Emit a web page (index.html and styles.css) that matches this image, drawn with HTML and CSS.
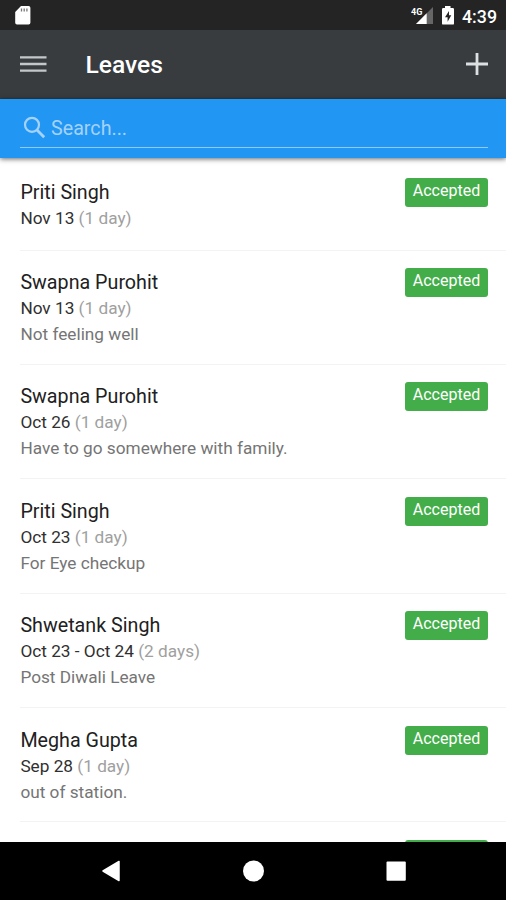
FILE: index.html
```html
<!DOCTYPE html>
<html lang="en">
<head>
<meta charset="utf-8">
<title>Leaves</title>
<link rel="stylesheet" href="styles.css">
</head>
<body>
<div class="screen">
  <div class="status">
    <svg class="sd" width="18" height="22" viewBox="0 0 18 22"><path d="M7 2h7.600a1.800 1.800 0 0 1 1.800 1.800v15a1.800 1.800 0 0 1-1.800 1.800H3a1.800 1.800 0 0 1-1.800-1.800V8z" fill="#fff"/><path d="M7.500 4.500v3M10.200 4.500v3M12.900 4.500v3" stroke="#777" stroke-width="1.300"/></svg>
    <div class="status-right">
      <svg width="24" height="22" viewBox="0 0 24 22"><path d="M22 3v17H5z" fill="#666"/><path d="M15.700 9.300V20H5z" fill="#fff"/><text x="0" y="10.500" class="net">4G</text></svg>
      <svg class="battery" width="14" height="22" viewBox="0 0 14 22"><path d="M4 2h5.500v2h2.300q1.200 0 1.200 1.200v14.200q0 1.200-1.200 1.200H2.200Q1 20.600 1 19.400V5.200Q1 4 2.200 4H4z" fill="#fff"/><path d="M8 7 4 13.300h2.600v4.500l3.700-6.500H8z" fill="#242424"/></svg>
      <span class="clock">4:39</span>
    </div>
  </div>
  <header class="toolbar">
    <svg width="28" height="20" viewBox="0 0 28 20"><path d="M0 3.300h26.500M0 10h26.500M0 16.700h26.500" stroke="#c3c7c8" stroke-width="2.300"/></svg>
    <h1>Leaves</h1>
    <svg class="plus" width="24" height="24" viewBox="0 0 24 24"><path d="M12 1v22M1 12h22" stroke="#dce0e1" stroke-width="2.800"/></svg>
  </header>
  <div class="search">
    <div class="field">
      <svg width="24" height="24" viewBox="0 0 24 24"><circle cx="9" cy="8.800" r="7" fill="none" stroke="#a5d2fa" stroke-width="2.200"/><path d="m14 14 7.200 7.200" stroke="#a5d2fa" stroke-width="2.800"/></svg>
      <span>Search...</span>
    </div>
  </div>
  <main class="list">
    <article class="row short"><div><h2>Priti Singh</h2><p class="date">Nov 13 <span>(1 day)</span></p></div><b class="tag">Accepted</b></article>
    <article class="row"><div><h2>Swapna Purohit</h2><p class="date">Nov 13 <span>(1 day)</span></p><p class="note">Not feeling well</p></div><b class="tag">Accepted</b></article>
    <article class="row"><div><h2>Swapna Purohit</h2><p class="date">Oct 26 <span>(1 day)</span></p><p class="note">Have to go somewhere with family.</p></div><b class="tag">Accepted</b></article>
    <article class="row"><div><h2>Priti Singh</h2><p class="date">Oct 23 <span>(1 day)</span></p><p class="note">For Eye checkup</p></div><b class="tag">Accepted</b></article>
    <article class="row"><div><h2>Shwetank Singh</h2><p class="date">Oct 23 - Oct 24 <span>(2 days)</span></p><p class="note">Post Diwali Leave</p></div><b class="tag">Accepted</b></article>
    <article class="row"><div><h2>Megha Gupta</h2><p class="date">Sep 28 <span>(1 day)</span></p><p class="note">out of station.</p></div><b class="tag">Accepted</b></article>
    <article class="row"><div></div><b class="tag"></b></article>
  </main>
  <nav class="navbar">
    <svg width="506" height="58" viewBox="0 0 506 58"><path d="M103 29 119 19.500v19z" fill="#fff" stroke="#fff" stroke-width="1.500" stroke-linejoin="round"/><circle cx="253.500" cy="29" r="10.500" fill="#fff"/><rect x="386.500" y="19.500" width="19.300" height="19.300" rx="1" fill="#fff"/></svg>
  </nav>
</div>
</body>
</html>
```
FILE: styles.css
```css
* { box-sizing: border-box; }
body { margin: 0; background: #fff; font-family: Roboto, "Liberation Sans", sans-serif; }
h1, h2, p { margin: 0; font-weight: 400; }
svg { display: block; flex: none; }
.screen { width: 506px; height: 900px; display: flex; flex-direction: column; overflow: hidden; }
.status { flex: none; height: 30px; background: #242424; display: flex; justify-content: space-between; padding: 4px 9px 0 14px; }
.status-right { display: flex; }
.net { font: 700 9px Roboto, sans-serif; fill: #fff; }
.battery { margin-left: 6px; }
.clock { margin-left: 7px; color: #fff; font-size: 17.8px; font-weight: 500; line-height: 25px; }
.toolbar { flex: none; height: 69px; background: #393c3f; border-bottom: 1px solid #2b3f48; display: flex; align-items: center; padding: 0 17px 0 20px; }
.toolbar h1 { margin-left: 37.500px; padding-top: 2px; flex: 1; color: #fff; font-size: 24.6px; font-weight: 500; line-height: 32px; }
.search { flex: none; height: 58.500px; background: #2196f3; padding: 0 18px 0 20px; position: relative; box-shadow: 0 1px 5px rgba(0, 0, 0, .6); }
.field { height: 49px; border-bottom: 1.500px solid #8fcbfa; display: flex; align-items: center; color: #a5d2fa; font-size: 19.700px; padding: 10px 0 0 3px; }
.field span { margin-left: 4px; padding-top: 1px; }
.list { flex: 1; min-height: 0; overflow: hidden; padding-top: 3px; }
.row { height: 114.400px; margin-left: 20px; padding: 17.500px 18px 0 .4px; border-bottom: 1px solid #f3f3f3; display: flex; justify-content: space-between; align-items: flex-start; }
.short { height: 90px; }
.row h2 { padding-top: 1px; font-size: 19.700px; line-height: 28px; color: #212121; }
.date { margin-top: -2px; font-size: 17.230px; line-height: 26px; color: #303030; }
.date span { color: #a0a0a0; }
.note { font-size: 17.230px; line-height: 26px; color: #757575; }
.tag { width: 83px; height: 29px; background: #43ad4a; border-radius: 3px; color: #fff; font-size: 16px; font-weight: 400; line-height: 26px; text-align: center; }
.navbar { flex: none; height: 58px; background: #000; }
```
